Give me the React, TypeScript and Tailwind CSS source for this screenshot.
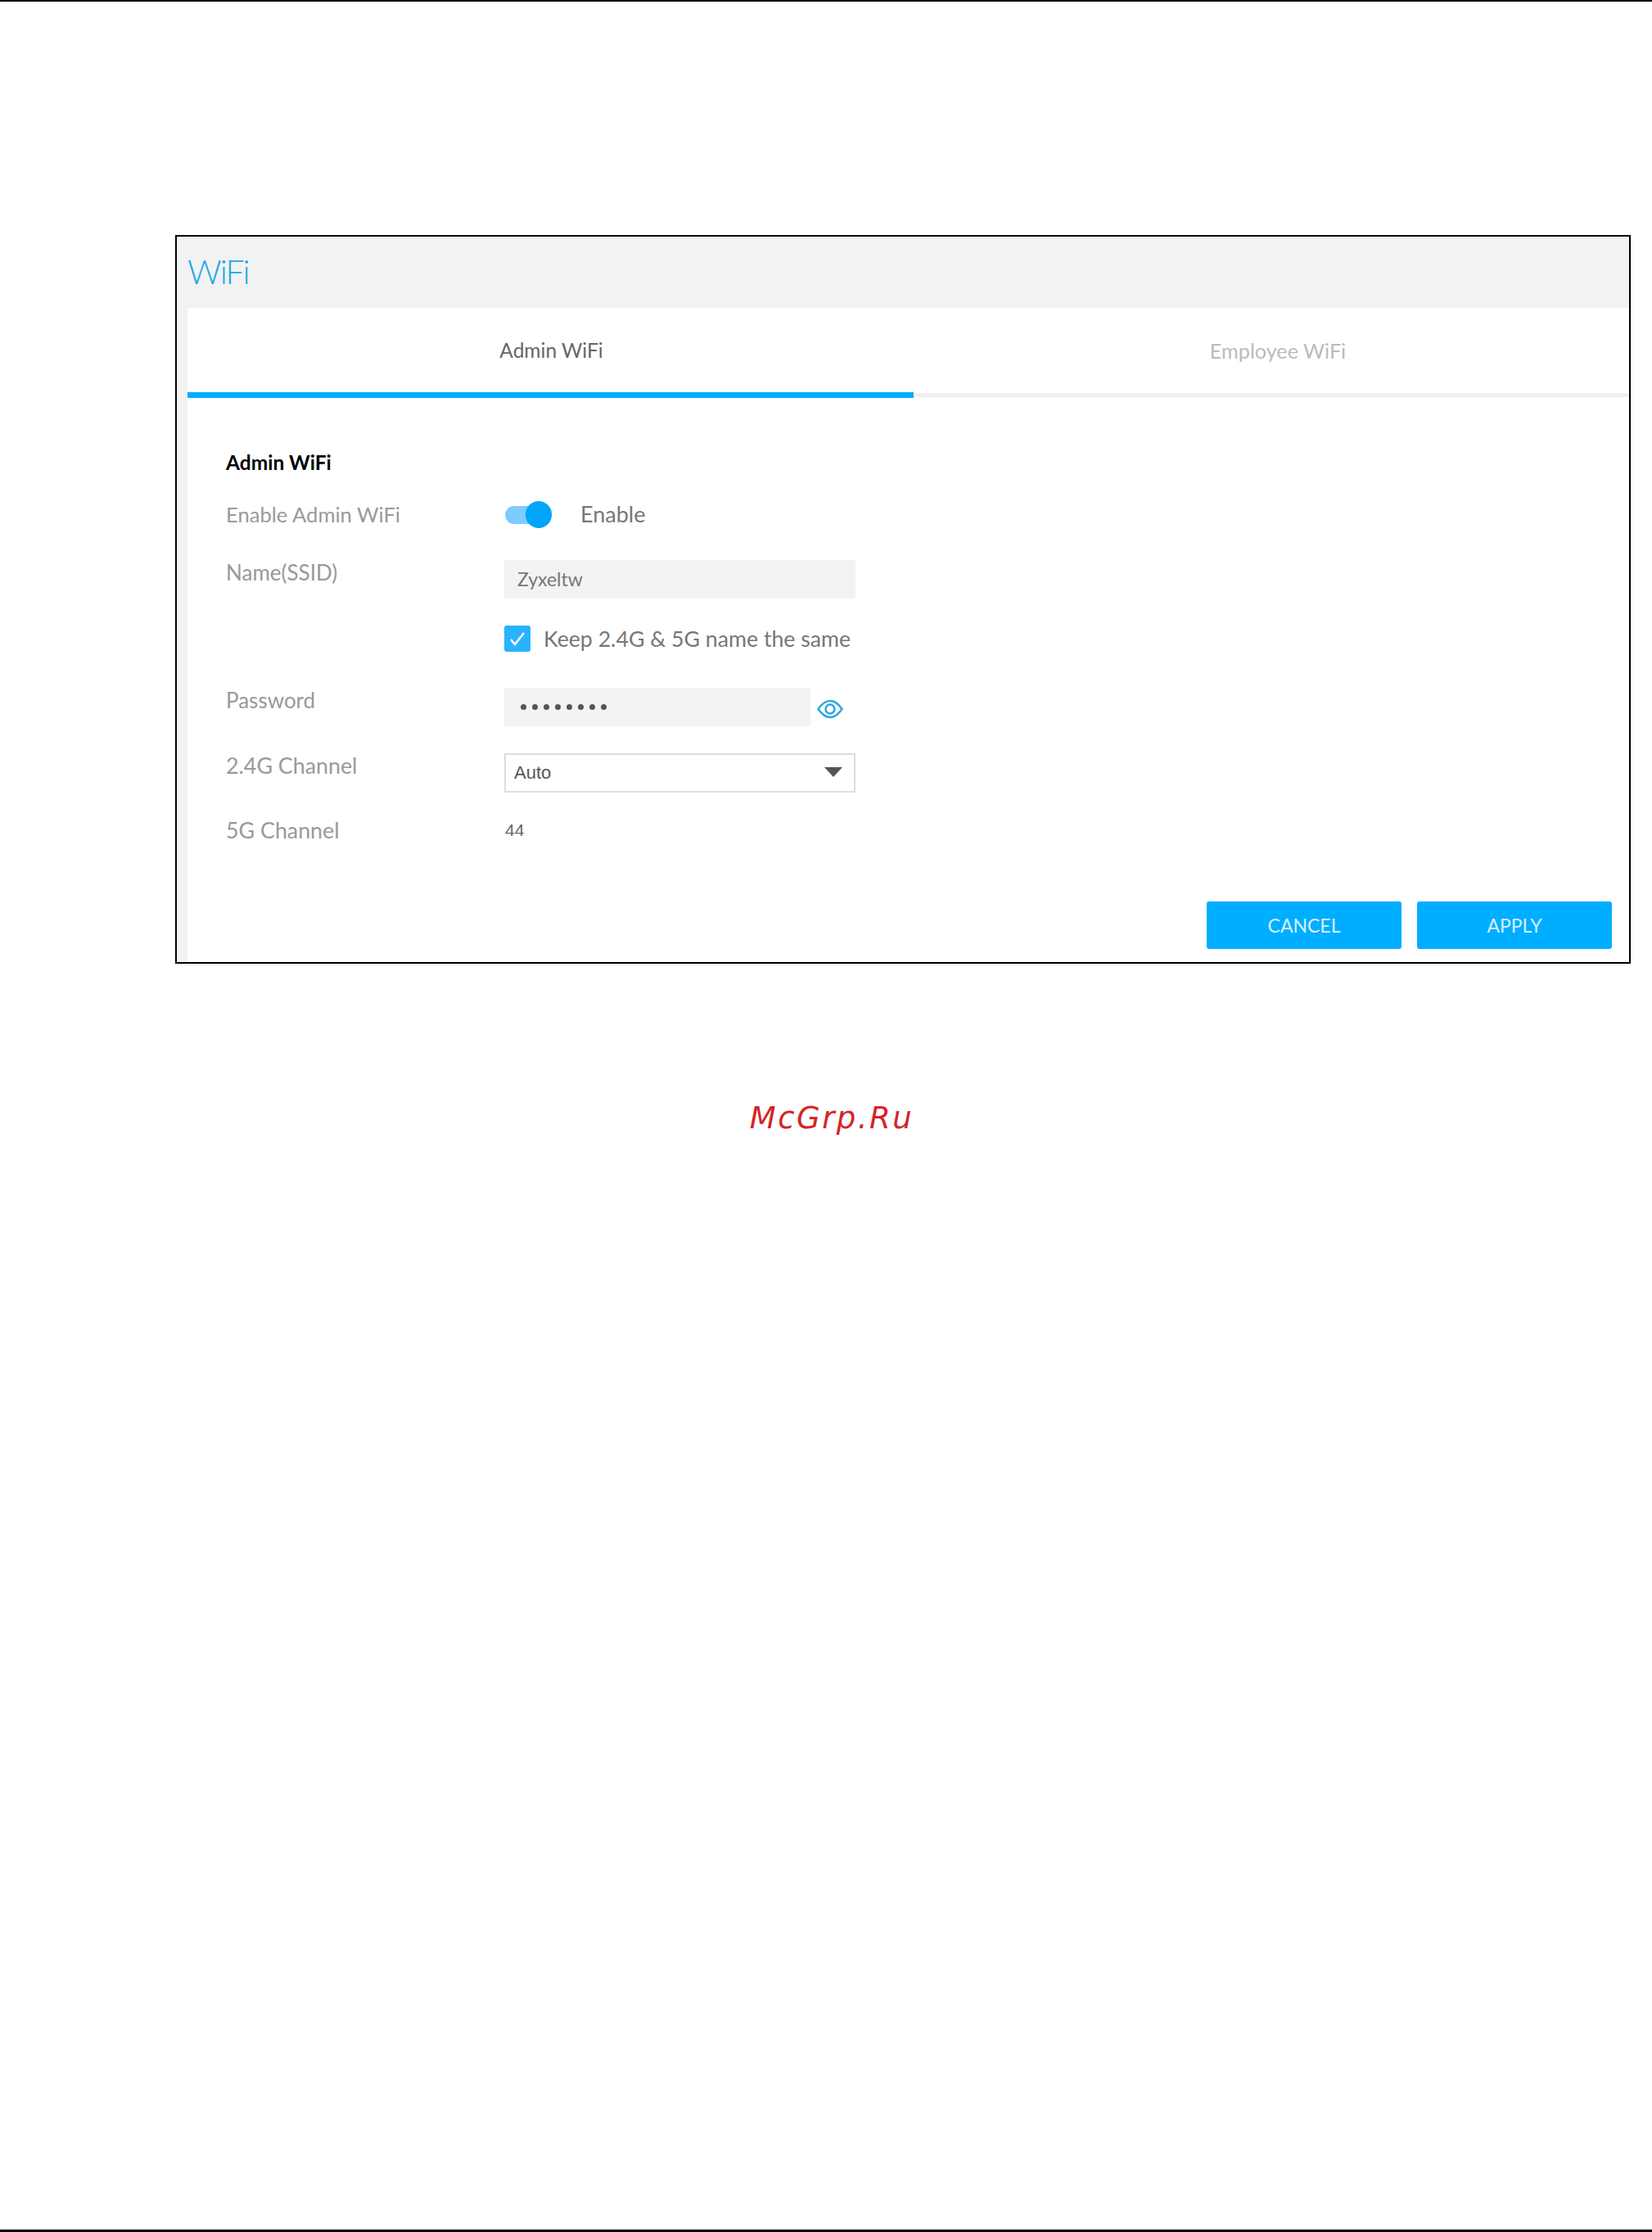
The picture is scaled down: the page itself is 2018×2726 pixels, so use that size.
const labelFont = "font-['Lato','Liberation_Sans',sans-serif]";

export default function App() {
  return (
    <div className={`w-[2018px] h-[2726px] bg-white flex flex-col justify-between border-t-2 border-b-[3px] border-black ${labelFont}`}>
      <div>
        {/* Screenshot frame */}
        <div className="mt-[285px] ml-[214px] w-[1778px] h-[890px] border-2 border-black bg-[#f2f2f2] flex flex-col">
          <div className="h-[87px] pl-[13px] pt-[19px] text-[41px] leading-[48px] tracking-[-2px] font-light text-[#1fa5e8]">WiFi</div>
          <div className="ml-[13px] flex-1 bg-white flex flex-col">
            {/* Tabs */}
            <div className="flex h-[110px]">
              <div className="w-[887px] h-[110px] border-b-[7px] border-[#00aeff] pl-[2px] pt-[2px] flex items-center justify-center text-[24.5px] text-[#666]">Admin WiFi</div>
              <div className="flex-1 h-[109px] border-b-[5px] border-[#f0f0f0] pl-[16px] pt-[2px] flex items-center justify-center text-[25.2px] text-[#bbb]">Employee WiFi</div>
            </div>

            <div className="relative flex-1 pl-[47px] pt-[63px]">
              <div className="text-[24.5px] leading-[32px] font-bold text-black">Admin WiFi</div>

              <div className="flex mt-[24px] h-[47px] items-center">
                <div className="w-[341px] text-[25.6px] text-[#999]">Enable Admin WiFi</div>
                <div className="relative w-[57px] h-[33px] flex items-center">
                  <div className="w-[44px] h-[22px] rounded-full bg-[#7fcbff]" />
                  <div className="absolute right-0 top-0 w-[32px] h-[33px] rounded-full bg-[#00a5fb]" />
                </div>
                <div className="ml-[35px] text-[27px] text-[#777]">Enable</div>
              </div>

              <div className="flex mt-[32px]">
                <div className="w-[340px] text-[26px] leading-[30px] text-[#999]">Name(SSID)</div>
                <div className="w-[429px] h-[47px] bg-[#f3f3f3] pl-[16px] flex items-center text-[23px] text-[#777]">Zyxeltw</div>
              </div>

              <div className="flex mt-[29px] items-center">
                <div className="w-[340px]" />
                <div className="w-[32px] h-[32px] rounded-[3px] bg-[#29b2fd] flex items-center justify-center">
                  <svg viewBox="0 0 24 24" className="w-[24px] h-[24px]" fill="none" stroke="white" strokeWidth="2.6">
                    <path d="M4 13l5 6L20 5" />
                  </svg>
                </div>
                <div className="ml-[16px] text-[26.7px] text-[#777]">Keep 2.4G &amp; 5G name the same</div>
              </div>

              <div className="flex mt-[40px]">
                <div className="w-[340px] text-[26px] leading-[30px] text-[#999]">Password</div>
                <div className="w-[374px] h-[47px] bg-[#f3f3f3] pl-[20px] flex items-center gap-[7px]">
                  {[0, 1, 2, 3, 4, 5, 6, 7].map((i) => (
                    <span key={i} className="w-[7px] h-[7px] rounded-full bg-[#555]" />
                  ))}
                </div>
                <svg viewBox="0 0 32 24" className="ml-[8px] mt-[14px] w-[32px] h-[24px]" fill="none" stroke="#2fa9e0" strokeWidth="2.6">
                  <path d="M1.5 12C6 5.5 11 2 16 2s10 3.5 14.500 10C26 18.500 21 22 16 22S6 18.500 1.500 12z" />
                  <circle cx="16" cy="12" r="5.500" />
                </svg>
              </div>

              <div className="flex mt-[33px]">
                <div className="w-[340px] text-[26.800px] leading-[30px] text-[#999]">2.4G Channel</div>
                <div className="w-[429px] h-[48px] border-2 border-[#ddd] pl-[10px] pr-[14px] pb-[2px] flex items-center justify-between font-['Liberation_Sans',sans-serif] text-[22px] text-[#555]">
                  Auto
                  <div className="w-0 h-0 border-x-[11px] border-x-transparent border-t-[12px] border-t-[#555]" />
                </div>
              </div>

              <div className="flex mt-[30px] items-center">
                <div className="w-[341px] text-[26.800px] leading-[30px] text-[#999]">5G Channel</div>
                <div className="font-['Liberation_Sans',sans-serif] text-[21px] text-[#666]">44</div>
              </div>

              <div className="absolute right-[21px] bottom-[16px] flex gap-[19px]">
                <button className="w-[238px] h-[58px] rounded-[3px] bg-[#00aeff] text-[23px] text-[#d8f1ff]">CANCEL</button>
                <button className="w-[238px] h-[58px] rounded-[3px] bg-[#00aeff] text-[23px] text-[#d8f1ff]">APPLY</button>
              </div>
            </div>
          </div>
        </div>

        <div className="mt-[167px] pl-[14px] text-center font-['DejaVu_Sans',sans-serif] italic text-[37px] leading-[44px] tracking-[2.5px] text-[#d62327]">McGrp.Ru</div>
      </div>
    </div>
  );
}
